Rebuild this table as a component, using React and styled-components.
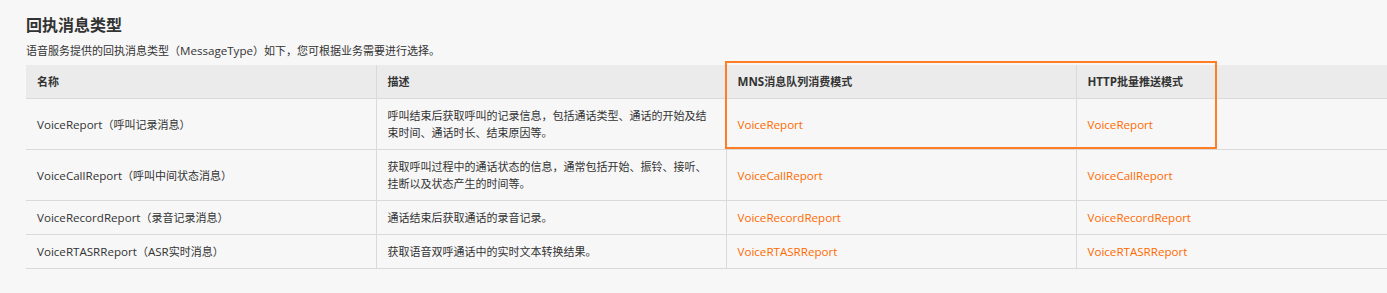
import React from "react";
import styled, { createGlobalStyle } from "styled-components";

const Global = createGlobalStyle`
  html, body { margin: 0; padding: 0; background: #f7f7f7; overflow: hidden; }
  body { font-family: "Noto Sans CJK SC", sans-serif; color: #333; }
`;

const Page = styled.div`
  padding: 12px 0 0 26px;
  width: 1400px;
`;

const Title = styled.h2`
  margin: 0;
  font-family: "Noto Sans CJK SC", sans-serif;
  font-size: 16px;
  font-weight: 700;
  line-height: 24px;
  color: #333;
`;

const Intro = styled.p`
  margin: 4px 0 0;
  font-size: 11px;
  line-height: 20px;
  color: #333;
`;

const Latin = styled.span`
  font-family: "Open Sans", "Noto Sans", sans-serif;
  font-size: 11.6px;
`;

const TableWrap = styled.div`
  position: relative;
  margin-top: 4px;
`;

const Table = styled.table`
  border-collapse: collapse;
  table-layout: fixed;
  width: 1400px;
  font-size: 11px;
  line-height: 17px;
`;

const Th = styled.th`
  text-align: left;
  font-weight: 700;
  background: #ebebeb;
  padding: 8px 11px;
  border-left: 1px solid #dadada;
  border-bottom: 1px solid #dadada;
  color: #333;
  &:first-child { border-left: none; }
`;

const Td = styled.td`
  padding: 8px 11px;
  border-left: 1px solid #dadada;
  border-bottom: 1px solid #dadada;
  vertical-align: middle;
  color: ${(p) => (p.$link ? "#ff6a00" : "#333")};
  &:first-child { border-left: none; }
`;

const Highlight = styled.div`
  position: absolute;
  left: 699px;
  top: -4px;
  width: 488px;
  height: 84px;
  border: 2px solid #ff7d25;
  pointer-events: none;
`;

function Mixed({ text }) {
  return text.split(/([A-Za-z]+)/).map((part, i) =>
    /^[A-Za-z]+$/.test(part) ? <Latin key={i}>{part}</Latin> : part
  );
}

const rows = [
  ["VoiceReport（呼叫记录消息）", "呼叫结束后获取呼叫的记录信息，包括通话类型、通话的开始及结束时间、通话时长、结束原因等。", "VoiceReport"],
  ["VoiceCallReport（呼叫中间状态消息）", "获取呼叫过程中的通话状态的信息，通常包括开始、振铃、接听、挂断以及状态产生的时间等。", "VoiceCallReport"],
  ["VoiceRecordReport（录音记录消息）", "通话结束后获取通话的录音记录。", "VoiceRecordReport"],
  ["VoiceRTASRReport（ASR实时消息）", "获取语音双呼通话中的实时文本转换结果。", "VoiceRTASRReport"],
];

const headers = ["名称", "描述", "MNS消息队列消费模式", "HTTP批量推送模式"];

export default function App() {
  return (
    <>
      <Global />
      <Page>
        <Title>回执消息类型</Title>
        <Intro>
          <Mixed text="语音服务提供的回执消息类型（MessageType）如下，您可根据业务需要进行选择。" />
        </Intro>
        <TableWrap>
          <Table>
            <colgroup>
              <col style={{ width: 350 }} />
              <col style={{ width: 350 }} />
              <col style={{ width: 350 }} />
              <col style={{ width: 350 }} />
            </colgroup>
            <thead>
              <tr>
                {headers.map((h) => (
                  <Th key={h}>
                    <Mixed text={h} />
                  </Th>
                ))}
              </tr>
            </thead>
            <tbody>
              {rows.map((r) => (
                <tr key={r[2]}>
                  <Td><Mixed text={r[0]} /></Td>
                  <Td>{r[1]}</Td>
                  <Td $link><Mixed text={r[2]} /></Td>
                  <Td $link><Mixed text={r[2]} /></Td>
                </tr>
              ))}
            </tbody>
          </Table>
          <Highlight />
        </TableWrap>
      </Page>
    </>
  );
}
